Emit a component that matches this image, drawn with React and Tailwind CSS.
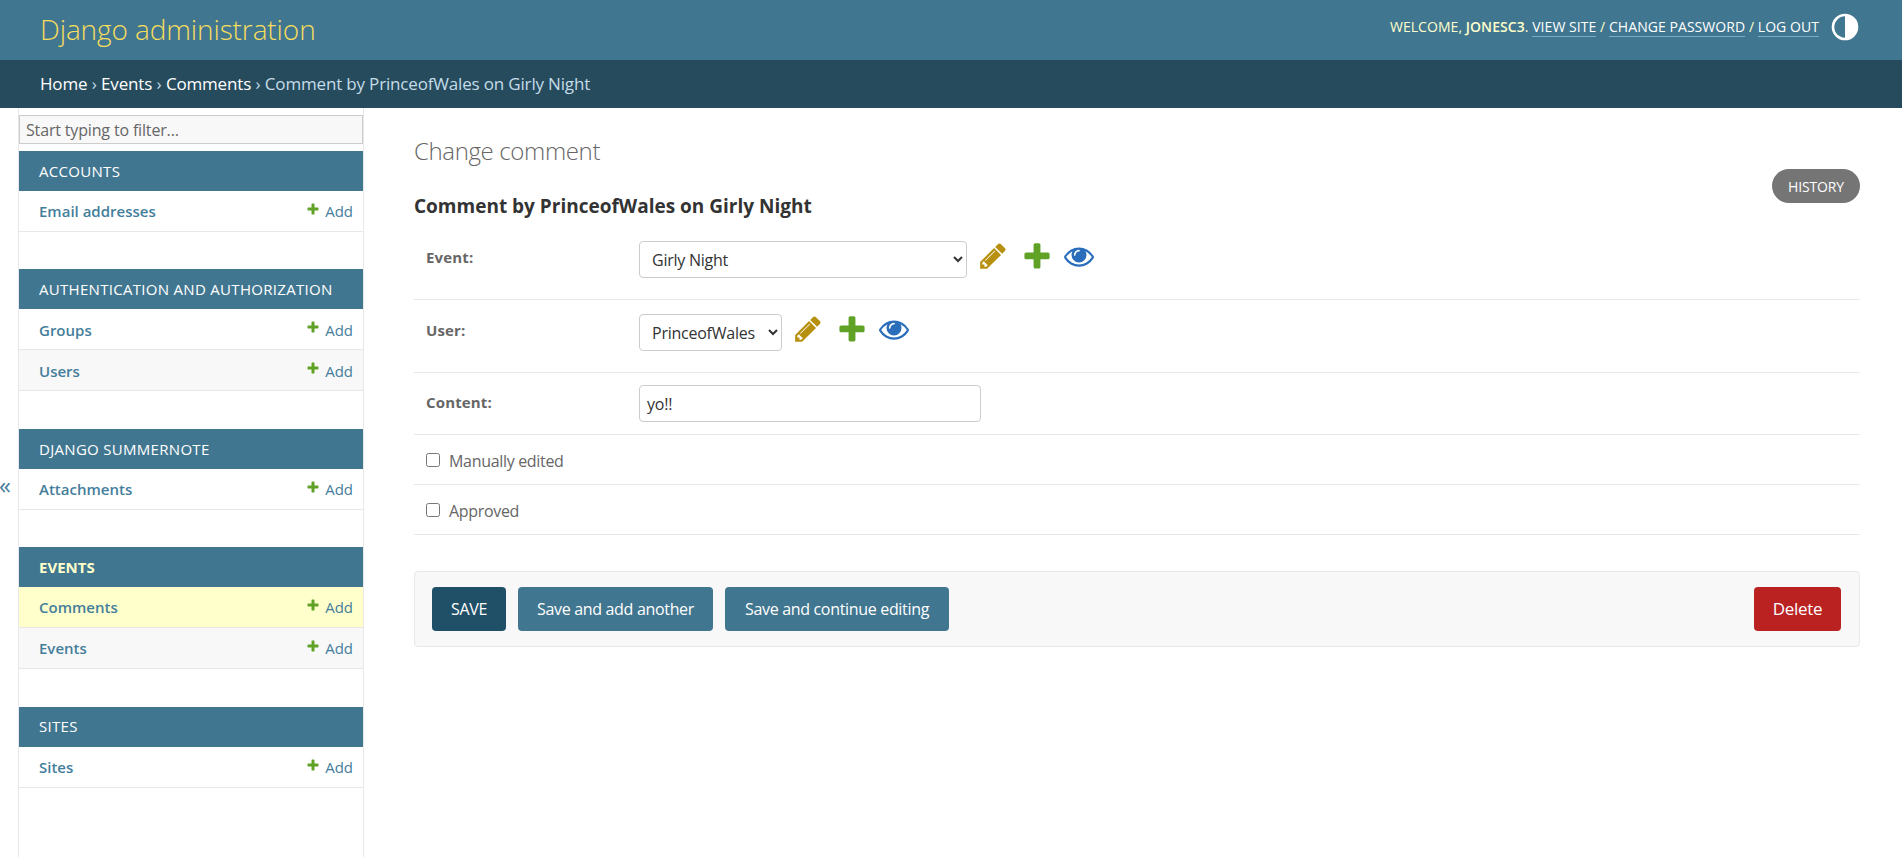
import React from 'react';

const font = { fontFamily: '"Open Sans", sans-serif' };

const sections = [
  { title: 'ACCOUNTS', models: ['Email addresses'] },
  { title: 'AUTHENTICATION AND AUTHORIZATION', models: ['Groups', 'Users'] },
  { title: 'DJANGO SUMMERNOTE', models: ['Attachments'] },
  { title: 'EVENTS', models: ['Comments', 'Events'], active: true },
  { title: 'SITES', models: ['Sites'] },
];

const PLUS =
  'M1600 796v192q0 40-28 68t-68 28h-416v416q0 40-28 68t-68 28h-192q-40 0-68-28t-28-68v-416h-416q-40 0-68-28t-28-68v-192q0-40 28-68t68-28h416v-416q0-40 28-68t68-28h192q40 0 68 28t28 68v416h416q40 0 68 28t28 68z';
const PENCIL =
  'M491 1536l91-91-235-235-91 91v107h128v128h107zm523-928q0-22-22-22-10 0-17 7l-542 542q-7 7-7 17 0 22 22 22 10 0 17-7l542-542q7-7 7-17zm-54-192l416 416-832 832h-416v-416zm683 96q0 53-37 90l-166 166-416-416 166-165q36-38 90-38 53 0 91 38l235 234q37 39 37 91z';
const EYE =
  'M1664 960q-152-236-381-353 61 104 61 225 0 185-131.5 316.5t-316.5 131.5-316.5-131.5-131.5-316.5q0-121 61-225-229 117-381 353 133 205 333.5 326.5t434.5 121.5 434.5-121.5 333.5-326.5zm-720-384q0-20-14-34t-34-14q-125 0-214.5 89.5t-89.5 214.5q0 20 14 34t34 14 34-14 14-34q0-86 61-147t147-61q20 0 34-14t14-34zm848 384q0 34-20 69-140 230-376.5 368.5t-499.5 138.5-499.5-139-376.5-368q-20-35-20-69t20-69q140-229 376.5-368t499.5-139 499.5 139 376.5 368q20 35 20 69z';

const Icon = ({ d, fill, className }) => (
  <svg viewBox="0 0 1792 1792" className={className}>
    <path d={d} fill={fill} />
  </svg>
);

const RelatedIcons = () => (
  <div className="flex items-center ml-[11px] mb-[6px]">
    <Icon d={PENCIL} fill="#b8900f" className="w-[30px] h-[30px]" />
    <Icon d={PLUS} fill="#5fa225" className="w-[32px] h-[32px] ml-[13px]" />
    <Icon d={EYE} fill="#2a6ebb" className="w-[30px] h-[30px] ml-[11px]" />
  </div>
);

const SidebarSection = ({ title, models, active }) => (
  <div className="mb-[37.4px]">
    <div
      className={`h-[40px] bg-[#417690] pl-[20px] flex items-center text-[15px] tracking-[0.02em] ${
        active ? 'font-bold text-[#ffffcc] tracking-[0em]' : 'text-white'
      }`}
    >
      {title}
    </div>
    {models.map((model, i) => (
      <div
        key={model}
        className={`h-[41px] pt-[1px] flex items-center justify-between pl-[20px] pr-[10px] border-b border-[#e8e8e8] text-[15px] text-[#447e9b] ${
          active && i === 0 ? 'bg-[#ffffcc]' : i % 2 === 1 ? 'bg-[#f8f8f8]' : 'bg-white'
        }`}
      >
        <span className="font-semibold">{model}</span>
        <span className="flex items-center gap-[5px]">
          <Icon d={PLUS} fill="#5fa225" className="w-[14px] h-[14px] -mt-[5px]" />
          Add
        </span>
      </div>
    ))}
  </div>
);

const Row = ({ label, children, className }) => (
  <div className={`flex items-start border-b border-[#e8e8e8] pl-[12px] ${className}`}>
    <label className="w-[213px] text-[15px] font-bold tracking-[0.01em] text-[#666] leading-[20px] pt-[7px]">{label}</label>
    {children}
  </div>
);

const CheckRow = ({ label, className }) => (
  <div className={`flex items-center gap-[9px] border-b border-[#e8e8e8] pl-[12px] pt-[3px] text-[16px] tracking-[-0.02em] text-[#666] ${className}`}>
    <input type="checkbox" className="w-[14px] h-[14px] -mt-[2px]" />
    <span>{label}</span>
  </div>
);

const inputClass =
  'h-[37px] border border-[#ccc] rounded-[4px] bg-white text-[16px] tracking-[-0.015em] text-[#333]';

const btnClass = 'h-[44px] rounded-[4px] text-white text-[16px] tracking-[-0.02em]';

export default function App() {
  return (
    <div className="h-[857px] flex flex-col overflow-hidden bg-white text-[#333]" style={font}>
      <header className="h-[60px] bg-[#417690] flex items-center justify-between pl-[40px] pr-[43px]">
        <h1 className="text-[28px] font-light tracking-[-0.004em] text-[#f5dd5d] -mt-[2px]">Django administration</h1>
        <div className="flex items-center gap-[12px] -mt-[7px]">
          <div className="text-[14px] tracking-[0.004em] text-[#ffffcc]">
            WELCOME, <strong className="font-semibold">JONESC3</strong>.{' '}
            <a className="text-white border-b border-[#79aec8]">VIEW SITE</a> /{' '}
            <a className="text-white border-b border-[#79aec8]">CHANGE PASSWORD</a> /{' '}
            <a className="text-white border-b border-[#79aec8]">LOG OUT</a>
          </div>
          <svg viewBox="0 0 28 28" className="w-[28px] h-[28px]">
            <circle cx="14" cy="14" r="12" fill="none" stroke="#fff" strokeWidth="2.6" />
            <path d="M14 2a12 12 0 0 1 0 24z" fill="#fff" />
          </svg>
        </div>
      </header>

      <nav className="h-[48px] bg-[#264b5d] flex items-center pl-[40px] text-[17px] tracking-[-0.01em] text-[#c4dce8]">
        <a className="text-white">Home</a>
        <span className="mx-[4.4px]">›</span>
        <a className="text-white">Events</a>
        <span className="mx-[4.4px]">›</span>
        <a className="text-white">Comments</a>
        <span className="mx-[4.4px]">›</span>
        <span>Comment by PrinceofWales on Girly Night</span>
      </nav>

      <div className="flex-1 flex min-h-0">
        <div className="w-[19px] shrink-0 relative border-r border-[#e8e8e8]">
          <span className="absolute -left-[1px] top-[363px] text-[24px] leading-[28px] text-[#447e9b]">«</span>
        </div>
        <aside className="w-[345px] shrink-0 border-r border-[#e8e8e8] pt-[7px]">
          <input
            placeholder="Start typing to filter..."
            className="block w-[344px] h-[29px] mb-[7px] border border-[#ccc] bg-[#f8f8f8] pl-[6px] pt-[1px] text-[16px] tracking-[-0.01em] placeholder:text-[#666]"
          />
          {sections.map((section) => (
            <SidebarSection key={section.title} {...section} />
          ))}
        </aside>

        <main className="flex-1 min-w-0 pl-[50px] pr-[42px]">
          <h2 className="text-[24px] font-light tracking-[-0.015em] text-[#666] mt-[27px] leading-[32px]">Change comment</h2>
          <div className="flex justify-end mt-[2px] h-[34px] mb-[-10px]">
            <a className="h-[34px] w-[88px] rounded-[17px] bg-[#757575] text-white text-[14px] tracking-[-0.01em] flex items-center justify-center">
              HISTORY
            </a>
          </div>
          <h3 className="text-[19px] font-bold text-[#333] leading-[26px] mb-[21px]">
            Comment by PrinceofWales on Girly Night
          </h3>

          <Row label="Event:" className="h-[60px]">
            <div className="flex items-center">
              <select defaultValue="Girly Night" className={`${inputClass} w-[328px] pl-[8px] pt-[2px]`}>
                <option>Girly Night</option>
              </select>
              <RelatedIcons />
            </div>
          </Row>
          <Row label="User:" className="h-[73px] pt-[13px]">
            <div className="flex items-center">
              <select defaultValue="PrinceofWales" className={`${inputClass} w-[143px] pl-[8px] pt-[2px]`}>
                <option>PrinceofWales</option>
              </select>
              <RelatedIcons />
            </div>
          </Row>
          <Row label="Content:" className="h-[62px] pt-[12px]">
            <input defaultValue="yo!!" className={`${inputClass} w-[342px] pl-[7px]`} />
          </Row>
          <CheckRow label="Manually edited" className="h-[50px]" />
          <CheckRow label="Approved" className="h-[50px]" />

          <div className="mt-[36px] h-[76px] flex items-center justify-between pl-[17px] pr-[18px] bg-[#f8f8f8] border border-[#e8e8e8] rounded-[4px]">
            <div className="flex gap-[12px]">
              <button className={`${btnClass} w-[74px] bg-[#205067]`}>SAVE</button>
              <button className={`${btnClass} w-[195px] bg-[#417690]`}>Save and add another</button>
              <button className={`${btnClass} w-[224px] bg-[#417690]`}>Save and continue editing</button>
            </div>
            <button className={`${btnClass} w-[87px] bg-[#ba2121] text-[17px]`}>Delete</button>
          </div>
        </main>
      </div>
    </div>
  );
}
